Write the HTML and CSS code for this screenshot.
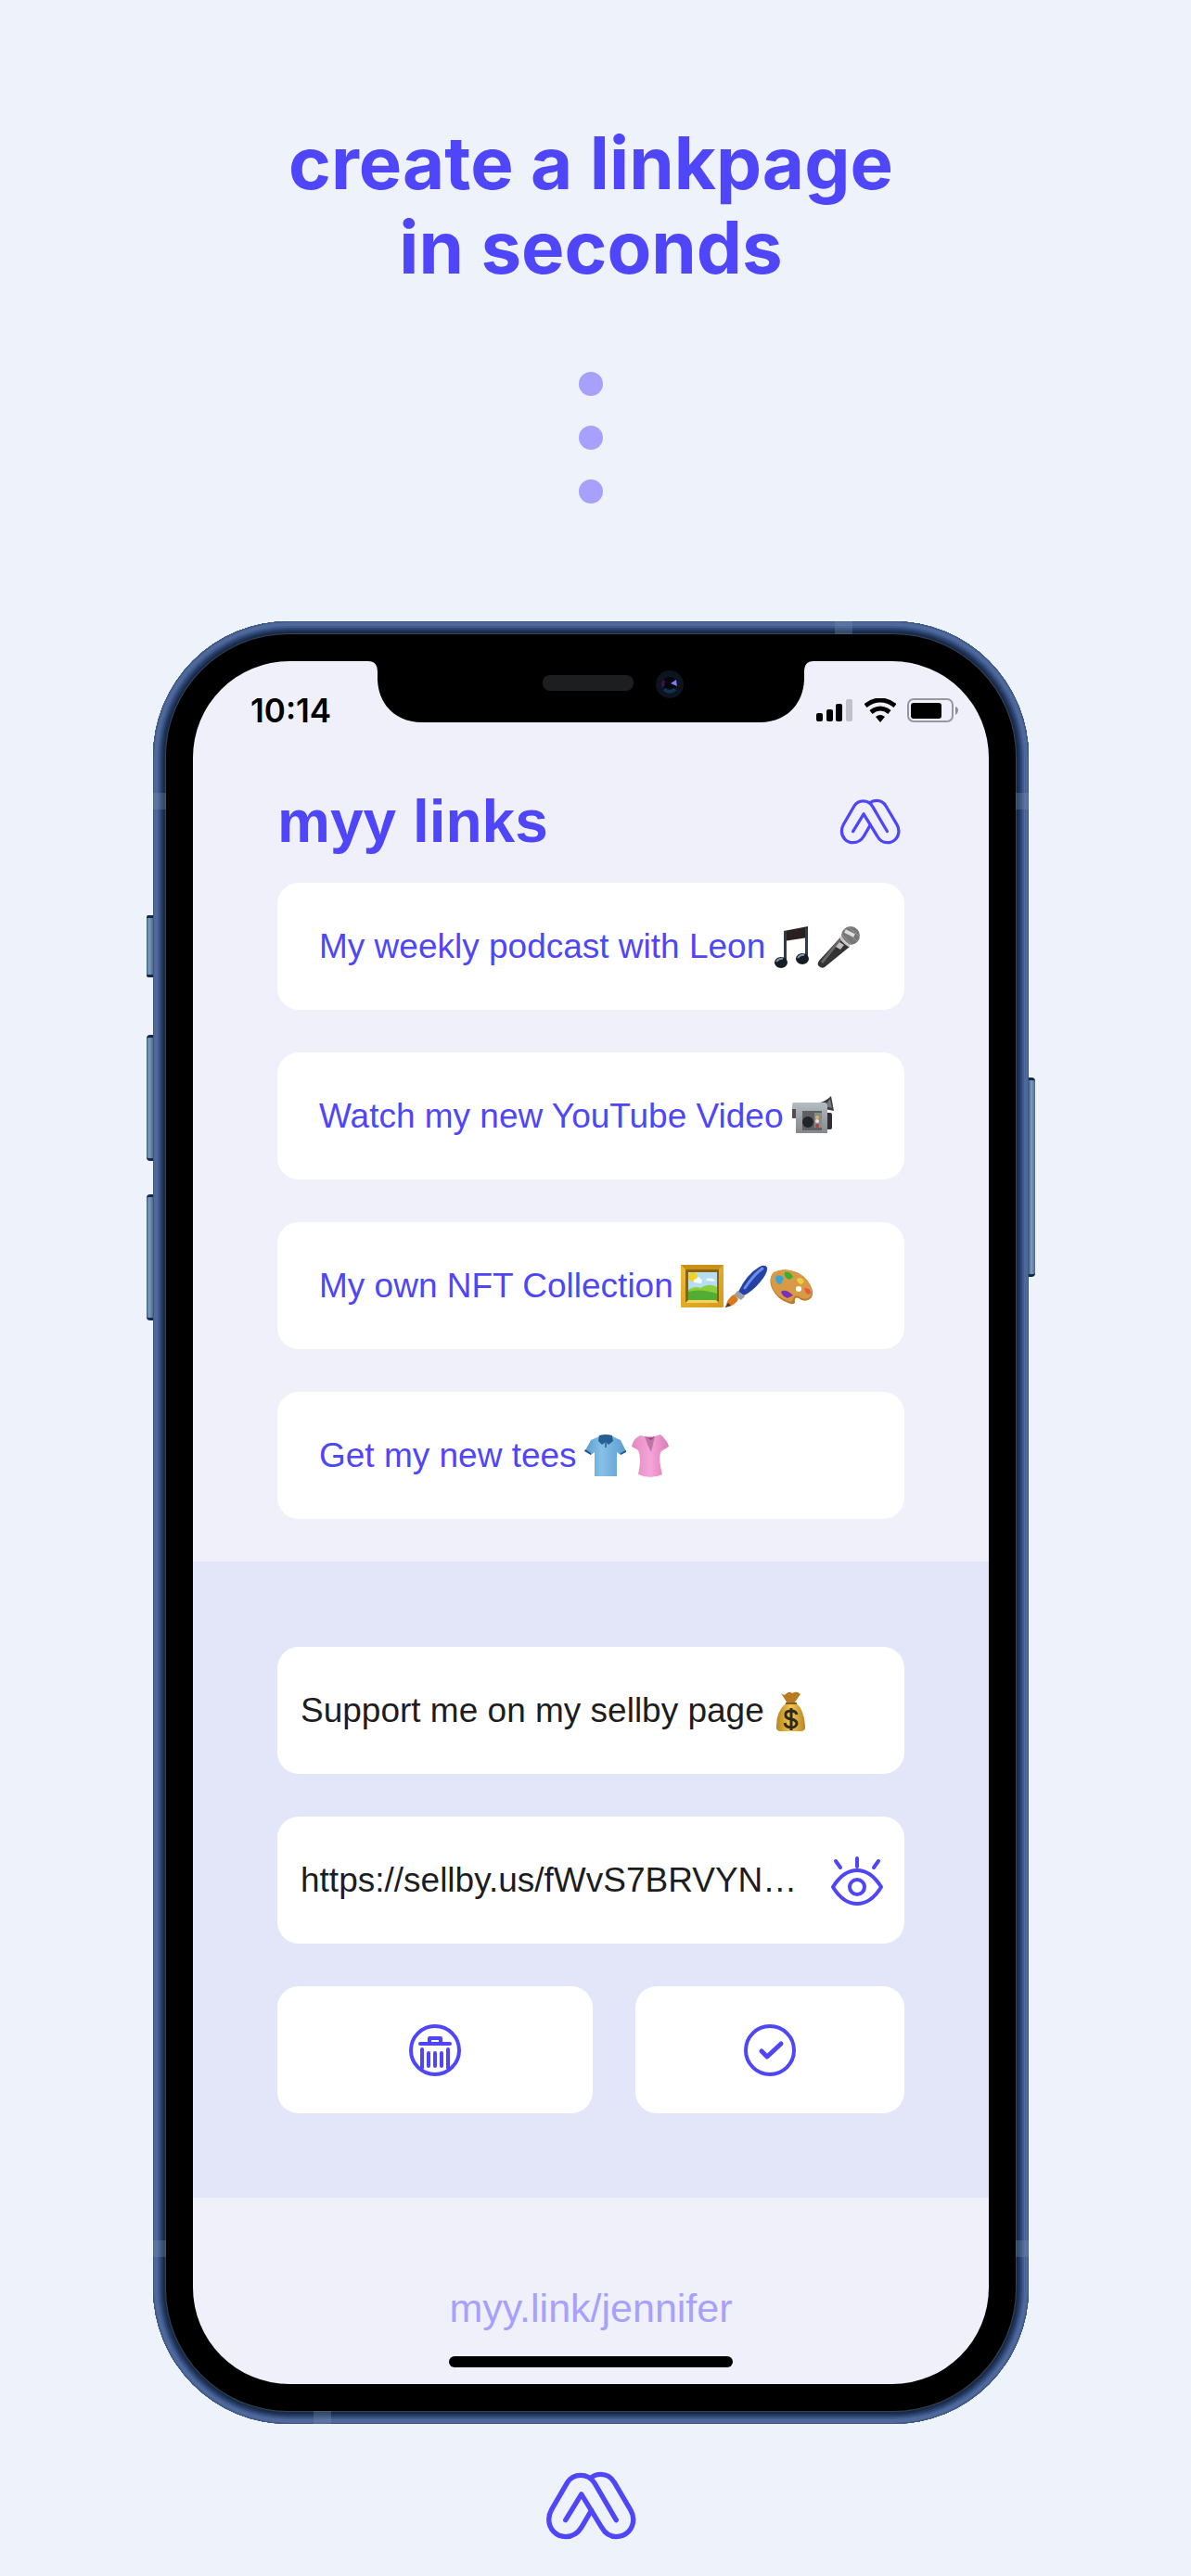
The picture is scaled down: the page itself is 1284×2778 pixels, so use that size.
FILE: index.html
```
<!DOCTYPE html>
<html lang="en">
<head>
    <meta charset="UTF-8">
    <meta name="viewport" content="width=device-width, initial-scale=1.0">
    <title>myy links - create a linkpage in seconds</title>
    <link rel="stylesheet" href="styles.css">
</head>
<body>
    <svg class="defs" aria-hidden="true">
        <defs>
            <symbol id="logo" viewBox="252 381 200 152">
                <path d="M296 489L331 432L375 504C383 518 394 526 408 526C430 526 446 509 446 488C446 480 444 474 440 467L404 406C397 394 387 388 374 388C365 388 357 391 352 396"/>
                <path d="M353 468L332 504C323 519 312 526 296 526C275 526 259 509 259 488C259 480 261 473 265 466L300 406C307 395 316 390 329 390C343 390 353 396 360 407L408 489"/>
            </symbol>
            <linearGradient id="gold" x1="0" y1="0" x2="1" y2="1">
                <stop offset="0" stop-color="#e9be3c"/>
                <stop offset="1" stop-color="#d79a17"/>
            </linearGradient>
            <linearGradient id="silver" x1="0" y1="0" x2="0" y2="1">
                <stop offset="0" stop-color="#b5bcc4"/>
                <stop offset="1" stop-color="#85878b"/>
            </linearGradient>
            <linearGradient id="blueShirt" x1="0" y1="0" x2="1" y2="0">
                <stop offset="0" stop-color="#5c9fd0"/>
                <stop offset=".4" stop-color="#86c0e8"/>
                <stop offset="1" stop-color="#5b9ccd"/>
            </linearGradient>
            <linearGradient id="pinkShirt" x1="0" y1="0" x2="1" y2="0">
                <stop offset="0" stop-color="#e488c0"/>
                <stop offset=".5" stop-color="#f4a5d8"/>
                <stop offset="1" stop-color="#dc7bb5"/>
            </linearGradient>
            <linearGradient id="bag" x1="0" y1="0" x2="1" y2="0">
                <stop offset="0" stop-color="#b98420"/>
                <stop offset=".5" stop-color="#ecc951"/>
                <stop offset="1" stop-color="#bb8522"/>
            </linearGradient>
        </defs>
    </svg>

    <h1 class="headline">create a linkpage<br>in seconds</h1>
    <div class="dots"><span></span><span></span><span></span></div>

    <main class="phone">
        <span class="side-button mute"></span>
        <span class="side-button volume-up"></span>
        <span class="side-button volume-down"></span>
        <span class="side-button power"></span>
        <span class="band band-left-top"></span>
        <span class="band band-right-top"></span>
        <span class="band band-left-bottom"></span>
        <span class="band band-right-bottom"></span>
        <span class="band band-top"></span>
        <span class="band band-bottom"></span>

        <div class="bezel">
            <div class="screen">
                <svg class="notch" viewBox="0 0 480 66" aria-hidden="true">
                    <path d="M0 0C7 0 10 4 10 12V20C11 47 30 66 58 66H422C450 66 469 47 470 20V12C470 4 473 0 480 0Z"/>
                    <rect x="188" y="15" width="98" height="17" rx="8" fill="#1c1e1f"/>
                    <circle cx="325" cy="25" r="15" fill="#0e1320"/>
                    <circle cx="325" cy="25" r="8" fill="#05060c"/>
                    <path d="M319 30A8 8 0 0 0 331 30" fill="none" stroke="#0c3350" stroke-width="4"/>
                    <path d="M319 21A8 8 0 0 0 318 28" fill="none" stroke="#3d1150" stroke-width="3"/>
                    <path d="M326 24L332 20L333 27Z" fill="#7f7cf5"/>
                </svg>

                <div class="status-bar">
                    <span class="time">10:14</span>
                    <div class="status-icons">
                        <svg width="40" height="26" viewBox="0 0 40 26" aria-label="Signal">
                            <rect x="0" y="16" width="7" height="9" rx="2"/>
                            <rect x="11" y="12" width="7" height="13" rx="2"/>
                            <rect x="21" y="6" width="7" height="19" rx="2"/>
                            <rect x="32" y="1" width="7" height="24" rx="2" fill="#c0bfca"/>
                        </svg>
                        <svg width="34" height="26" viewBox="0 0 34 26" aria-label="Wi-Fi">
                            <path d="M1 8Q17 -4 33 8M7 15Q17 7 27 15" fill="none" stroke="#000" stroke-width="5"/>
                            <path d="M12 20Q17 16 22 20L17 26Z"/>
                        </svg>
                        <svg width="56" height="26" viewBox="0 0 56 26" aria-label="Battery">
                            <rect x="1" y="1" width="48" height="24" rx="6" fill="none" stroke="#98979f" stroke-width="2"/>
                            <rect x="4" y="5" width="33" height="17" rx="3"/>
                            <path d="M52 9Q55 10 55 13Q55 16 52 18Z" fill="#8d8d95"/>
                        </svg>
                    </div>
                </div>

                <header class="page-header">
                    <h2>myy links</h2>
                    <svg class="logo" aria-label="myy"><use href="#logo"/></svg>
                </header>

                <nav class="links">
                    <a class="card" href="#podcast">My weekly podcast with Leon
                        <span class="emojis">
                            <svg class="emoji" viewBox="0 0 46 46" aria-label="music notes">
                                <path d="M12 6L38 1V13L12 17Z" fill="#2b2021"/>
                                <path d="M12 6H15V39H12ZM35 3H38V35H35Z" fill="#333c45"/>
                                <ellipse cx="9" cy="40" rx="7" ry="6" fill="#161c24"/>
                                <ellipse cx="32" cy="36" rx="7" ry="6" fill="#161c24"/>
                                <path d="M4 39Q7 35 11 36M27 35Q30 31 34 32" fill="none" stroke="#8599ac" stroke-width="2"/>
                            </svg>
                            <svg class="emoji" viewBox="0 0 46 46" aria-label="microphone">
                                <path d="M25 13L35 23L8 45Q4 47 1 43Q0 41 2 38Z" fill="#343434"/>
                                <path d="M25 15L5 40" stroke="#686868" stroke-width="3"/>
                                <circle cx="36" cy="11" r="10" fill="#777"/>
                                <path d="M29 4L43 17M34 2L46 12M26 9L37 21" stroke="#999" stroke-width="1"/>
                                <path d="M30 6L40 11" stroke="#ddd" stroke-width="4"/>
                                <path d="M25 12Q28 18 35 22" fill="none" stroke="#c9c9c9" stroke-width="3"/>
                                <path d="M20 23L24 18L29 21L25 26Z" fill="#c4bfc0"/>
                            </svg>
                        </span>
                    </a>
                    <a class="card" href="#video">Watch my new YouTube Video
                        <span class="emojis">
                            <svg class="emoji" viewBox="0 0 46 46" aria-label="video camera">
                                <path d="M26 9Q36 8 43 1L46 17L36 15Z" fill="#3a3d42"/>
                                <path d="M42 4L44 14L36 12Z" fill="#777b80"/>
                                <rect x="36" y="19" width="8" height="18" rx="2" fill="#2e3035"/>
                                <path d="M2 8H37Q39 9 39 12V41H5V25H1V10Z" fill="url(#silver)"/>
                                <path d="M1 15H5V25H1Z" fill="#584a4d"/>
                                <rect x="12" y="17" width="21" height="21" fill="#5e6064"/>
                                <rect x="25" y="19" width="8" height="16" fill="#898b8e"/>
                                <circle cx="18" cy="29" r="6" fill="#222427"/>
                                <circle cx="28" cy="24" r="2" fill="#d5b650"/>
                                <circle cx="28" cy="28" r="2" fill="#e2e2e2"/>
                                <circle cx="28" cy="33" r="2" fill="#b33c3c"/>
                            </svg>
                        </span>
                    </a>
                    <a class="card" href="#nft">My own NFT Collection
                        <span class="emojis">
                            <svg class="emoji" viewBox="0 0 46 46" aria-label="framed picture">
                                <rect width="46" height="46" rx="1" fill="url(#gold)"/>
                                <path d="M0 0H46L41 5H5Z" fill="#c99116"/>
                                <rect x="5" y="5" width="36" height="36" fill="#8d6110"/>
                                <path d="M5 41L8 38H38L41 41Z" fill="#f4d45a"/>
                                <rect x="8" y="8" width="31" height="30" fill="#b5dff0"/>
                                <path d="M8 27Q15 22 21 25Q30 19 39 24V38H8Z" fill="#8ccf3b"/>
                                <path d="M8 29Q20 25 39 31V38H8Z" fill="#52ad35"/>
                                <circle cx="13" cy="13" r="5" fill="#f3d226"/>
                                <path d="M14 19Q13 15 17 15Q19 11 21 15Q24 16 22 20ZM27 17Q29 13 32 15Q36 14 37 18Z" fill="#f7fbff"/>
                            </svg>
                            <svg class="emoji" viewBox="0 0 46 46" aria-label="paintbrush">
                                <path d="M14 29Q23 10 37 2Q43 -1 45 3Q46 8 38 18Q29 29 20 33Z" fill="#2441a5"/>
                                <path d="M21 25Q31 10 40 4" fill="none" stroke="#718de8" stroke-width="3" stroke-linecap="round"/>
                                <path d="M13 28L21 34L17 38L9 33Z" fill="#9b9ea2"/>
                                <path d="M9 32L14 37Q11 44 0 46Q2 36 9 32Z" fill="#d97b1d"/>
                                <path d="M3 41L0 46L6 44Z" fill="#50352a"/>
                            </svg>
                            <svg class="emoji" viewBox="0 0 46 46" aria-label="palette">
                                <path d="M4 9Q15 2 31 9Q43 16 46 28Q47 36 41 38Q35 40 31 36Q26 34 27 40Q27 43 22 42Q8 38 2 25Q-2 15 4 9Z" fill="#bd7c2d"/>
                                <path d="M4 8Q15 2 31 9Q42 15 45 27Q46 34 41 36Q35 38 31 34Q26 32 25 37Q24 41 20 39Q7 35 2 23Q-1 13 4 8Z" fill="#d79a45"/>
                                <path d="M6 13Q10 9 15 14L12 21Q6 21 6 13Z" fill="#35a6da"/>
                                <path d="M16 8Q22 7 25 13L21 16Q15 14 16 8Z" fill="#36ae38"/>
                                <path d="M29 15Q34 12 37 18L34 21Q29 20 29 15Z" fill="#f2ca42"/>
                                <path d="M37 25Q44 24 44 31Q39 34 37 25Z" fill="#e75a43"/>
                                <path d="M12 29Q17 25 25 33L19 36Q13 34 12 29Z" fill="#7b31b7"/>
                                <circle cx="31" cy="26" r="3" fill="#fff"/>
                            </svg>
                        </span>
                    </a>
                    <a class="card" href="#tees">Get my new tees
                        <span class="emojis">
                            <svg class="emoji" viewBox="0 0 46 46" aria-label="t-shirt">
                                <path d="M16 2L30 2L39 6L45 18L39 22L35 19V45H11V19L7 22L1 17L7 6Z" fill="url(#blueShirt)"/>
                                <path d="M1 16L7 20L7 22L0 18ZM45 17L39 20V22L45 19Z" fill="#1f578d"/>
                                <path d="M16 1Q23 -1 30 1L31 7L26 11L23 8L19 11L15 7Z" fill="#275e94"/>
                                <path d="M23 8V14" stroke="#3974a5" stroke-width="2"/>
                            </svg>
                            <svg class="emoji" viewBox="0 0 46 46" aria-label="blouse">
                                <path d="M12 1L17 2H28L34 0Q42 7 43 13L35 18Q31 23 36 43Q23 49 10 43Q14 26 10 17L3 13Q5 4 12 1Z" fill="url(#pinkShirt)"/>
                                <path d="M17 2Q23 5 28 2L24 19Q20 12 17 2Z" fill="#c175a5"/>
                                <path d="M17 2Q23 5 28 2L24 6Z" fill="#9b3f77"/>
                            </svg>
                        </span>
                    </a>
                </nav>

                <form class="editor">
                    <div class="card field">
                        <input class="name-input" type="text" aria-label="Link title" value="Support me on my sellby page">
                        <svg class="emoji" viewBox="0 0 46 46" aria-label="money bag">
                            <path d="M12 4Q15 7 17 5Q21 1 24 4Q29 1 33 5L26 15H19Z" fill="#b77c23"/>
                            <path d="M18 14H28Q37 22 38 39Q39 45 33 45H12Q6 45 7 39Q7 23 18 14Z" fill="url(#bag)"/>
                            <path d="M17 15H29" stroke="#8a5a18" stroke-width="2"/>
                            <path d="M29 27Q28 23 23 23Q16 23 17 28Q17 31 23 32Q29 33 29 37Q28 41 23 41Q17 41 16 36M23 20V44" fill="none" stroke="#33291b" stroke-width="3"/>
                        </svg>
                    </div>
                    <div class="card field">
                        <input class="url-input" type="text" aria-label="Link address" value="https://sellby.us/fWvS7BRVYN…">
                        <button class="preview" type="button" aria-label="Preview">
                            <svg class="icon" viewBox="0 0 56 56">
                                <path d="M2 35Q13 17 28 17Q43 17 54 35Q43 53 28 53Q13 53 2 35Z"/>
                                <circle cx="28" cy="35" r="8"/>
                                <path d="M28 4V13M5 7L10 14M51 7L46 14"/>
                            </svg>
                        </button>
                    </div>
                    <div class="actions">
                        <button class="card" type="button" aria-label="Delete">
                            <svg class="icon" viewBox="0 0 56 56">
                                <circle cx="28" cy="28" r="26"/>
                                <path d="M12 21H44M22 20V15H34V20M14 27V47M42 27V47M21 31V45M28 31V45M35 31V45"/>
                            </svg>
                        </button>
                        <button class="card" type="submit" aria-label="Save">
                            <svg class="icon" viewBox="0 0 56 56">
                                <circle cx="28" cy="28" r="26"/>
                                <path d="M19 29L25 35L40 21" stroke-width="5"/>
                            </svg>
                        </button>
                    </div>
                </form>

                <footer class="page-footer">
                    <a href="#jennifer">myy.link/jennifer</a>
                    <span class="home-indicator"></span>
                </footer>
            </div>
        </div>
    </main>

    <svg class="logo logo-large" aria-label="myy"><use href="#logo"/></svg>
</body>
</html>
```
FILE: styles.css
```
* {
    box-sizing: border-box;
}
body {
    margin: 0;
    padding: 130px 10px 38px 0;
    min-height: 100vh;
    display: flex;
    flex-direction: column;
    align-items: center;
    background: #eef2fa;
    font-family: "Liberation Sans", Arial, sans-serif;
    color: #4f46f9;
}
a {
    color: inherit;
    text-decoration: none;
}
.defs {
    position: absolute;
    width: 0;
    height: 0;
}
.headline {
    margin: 0;
    font-family: Inter, sans-serif;
    font-size: 78px;
    line-height: 91px;
    font-weight: 700;
    text-align: center;
}
.dots {
    display: flex;
    flex-direction: column;
    gap: 32px;
    margin: 89px 0 127px;
}
.dots span {
    width: 26px;
    height: 26px;
    border-radius: 50%;
    background: #a7a1fd;
}

/* Phone frame */
.phone {
    position: relative;
    width: 100%;
    max-width: 944px;
    padding: 14px;
    border-radius: 146px;
    background: #1b3052;
    box-shadow: inset 0 0 0 1px #3c587f, inset 0 0 0 5px #4f689c, inset 0 0 0 7px #41598b,
        inset 0 0 0 9px #2e4773, inset 0 0 0 11px #20365b, inset 0 0 0 13px #182a4a, inset 0 0 0 15px #3a414d;
}
.bezel {
    padding: 29px;
    border-radius: 132px;
    background: #000;
}
.screen {
    position: relative;
    border-radius: 104px;
    background: #f0f0fa;
    overflow: hidden;
}
.side-button {
    position: absolute;
    left: -7px;
    width: 7px;
    height: 136px;
    border-radius: 4px 0 0 4px;
    border: solid #142947;
    border-width: 3px 0;
    background: linear-gradient(to right, #3d5b80, #829dc4 40%, #4d6a8d);
}
.mute {
    top: 317px;
    height: 67px;
    border-radius: 2px 0 0 2px;
}
.volume-up {
    top: 446px;
}
.volume-down {
    top: 618px;
}
.power {
    top: 492px;
    left: auto;
    right: -7px;
    height: 215px;
    border-radius: 0 4px 4px 0;
}
.band {
    position: absolute;
    width: 14px;
    height: 18px;
    background: rgba(120, 150, 175, 0.3);
}
.band-left-top {
    left: 0;
    top: 185px;
}
.band-right-top {
    right: 0;
    top: 185px;
}
.band-left-bottom {
    left: 0;
    bottom: 180px;
}
.band-right-bottom {
    right: 0;
    bottom: 180px;
}
.band-top {
    top: 0;
    right: 190px;
    width: 19px;
    height: 14px;
}
.band-bottom {
    bottom: 0;
    left: 173px;
    width: 19px;
    height: 14px;
}
.notch {
    position: absolute;
    top: 0;
    left: 50%;
    width: 480px;
    height: 66px;
    transform: translateX(-50%);
}

/* Screen content */
.status-bar {
    display: flex;
    justify-content: space-between;
    align-items: center;
    height: 106px;
    padding: 0 32px 0 62px;
    color: #000;
}
.time {
    font-family: Inter, sans-serif;
    font-size: 35px;
    font-weight: 600;
}
.status-icons {
    display: flex;
    gap: 12px;
}
.page-header {
    display: flex;
    justify-content: space-between;
    align-items: center;
    height: 133px;
    padding: 0 95px 0 91px;
}
.page-header h2 {
    margin: 0;
    font-size: 64px;
}
.logo {
    width: 66px;
    height: 50px;
    fill: none;
    stroke: #4f46f9;
    stroke-width: 10;
    stroke-linecap: round;
    stroke-linejoin: round;
}
.logo-large {
    width: 98px;
    height: 74px;
    margin-top: 51px;
    stroke-width: 11;
}
.links {
    display: flex;
    flex-direction: column;
    gap: 46px;
    padding: 0 91px 46px;
}
.card {
    display: flex;
    align-items: center;
    height: 137px;
    padding: 0 45px;
    border: none;
    border-radius: 23px;
    background: #fff;
    font-size: 37px;
    white-space: nowrap;
}
.emojis {
    display: flex;
    gap: 2px;
    margin-left: 8px;
}
.emoji {
    width: 46px;
    height: 46px;
    flex-shrink: 0;
}
.editor {
    display: flex;
    flex-direction: column;
    gap: 46px;
    padding: 92px 91px 91px;
    background: #e3e6f9;
}
.field {
    padding: 0 23px 0 25px;
}
.field input {
    min-width: 0;
    padding: 0;
    border: none;
    outline: none;
    background: transparent;
    font: inherit;
    color: #1d1d21;
}
.name-input {
    field-sizing: content;
    margin-right: 6px;
}
.url-input {
    flex: 1;
}
.preview {
    display: flex;
    padding: 0;
    border: none;
    background: none;
}
.icon {
    width: 56px;
    height: 56px;
    fill: none;
    stroke: #4f46f9;
    stroke-width: 4;
    stroke-linecap: round;
    stroke-linejoin: round;
}
.preview,
.actions button {
    cursor: pointer;
}
.actions {
    display: grid;
    grid-template-columns: 340fr 290fr;
    gap: 46px;
}
.actions button {
    justify-content: center;
}
.page-footer {
    display: flex;
    flex-direction: column;
    align-items: center;
    gap: 27px;
    padding: 94px 0 18px;
    font-size: 43px;
    line-height: 50px;
    color: #a7a1fd;
}
.home-indicator {
    width: 306px;
    height: 12px;
    border-radius: 6px;
    background: #000;
}
```
